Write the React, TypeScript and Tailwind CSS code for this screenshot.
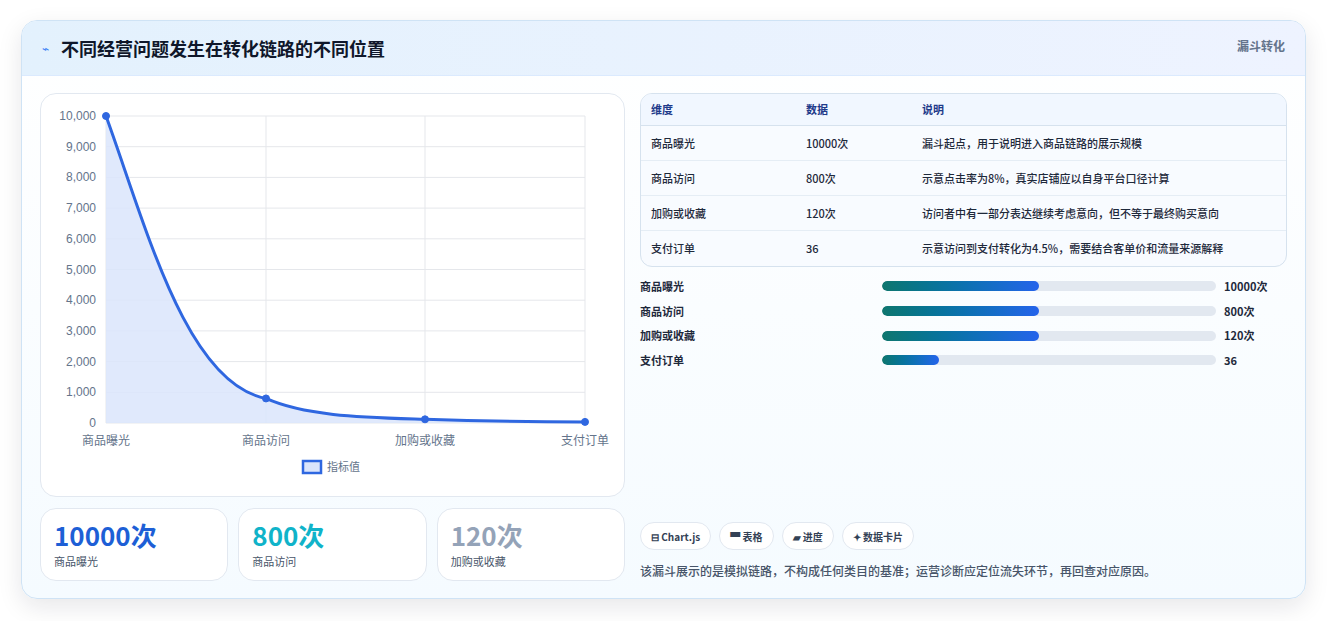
const font = { fontFamily: '"Noto Sans CJK SC", "Noto Sans", sans-serif' };

const rows = [
  ['商品曝光', '10000次', '漏斗起点，用于说明进入商品链路的展示规模'],
  ['商品访问', '800次', '示意点击率为8%，真实店铺应以自身平台口径计算'],
  ['加购或收藏', '120次', '访问者中有一部分表达继续考虑意向，但不等于最终购买意向'],
  ['支付订单', '36', '示意访问到支付转化为4.5%，需要结合客单价和流量来源解释'],
];

const bars = [
  ['商品曝光', 47, '10000次'],
  ['商品访问', 47, '800次'],
  ['加购或收藏', 47, '120次'],
  ['支付订单', 17, '36'],
] as const;

const Chart = () => {
  const x0 = 65, x1 = 544, y0 = 22, y1 = 329;
  const xs = [65, 225, 384, 544];
  const ys = [10000, 800, 120, 36].map((v) => y1 - (v / 10000) * (y1 - y0));
  const line = `M${xs[0]},${ys[0]} C${xs[0] + 40},${ys[0] + 110} ${xs[1] - 80},${ys[1] - 15} ${xs[1]},${ys[1]} C${xs[1] + 40},${ys[1] + 18} ${xs[2] - 60},${ys[2] - 2} ${xs[2]},${ys[2]} C${xs[2] + 60},${ys[2] + 2} ${xs[3] - 60},${ys[3]} ${xs[3]},${ys[3]}`;
  const ticks = Array.from({ length: 11 }, (_, i) => i * 1000);
  const labels = ['商品曝光', '商品访问', '加购或收藏', '支付订单'];
  return (
    <svg width="585" height="403" className="block">
      {ticks.map((t) => {
        const y = y1 - (t / 10000) * (y1 - y0);
        return (
          <g key={t}>
            <line x1={x0} x2={x1} y1={y} y2={y} stroke="#e5e7eb" />
            <text x={55} y={y + 4} textAnchor="end" fontSize="12" fill="#64748b" fontFamily="Liberation Sans, sans-serif">
              {t.toLocaleString('en-US')}
            </text>
          </g>
        );
      })}
      {xs.map((x) => (
        <line key={x} x1={x} x2={x} y1={y0} y2={y1} stroke="#e5e7eb" />
      ))}
      <path d={`${line} L${x1},${y1} L${x0},${y1} Z`} fill="#dbe5fb" opacity="0.85" />
      <path d={line} fill="none" stroke="#2f67e0" strokeWidth="3" />
      {xs.map((x, i) => (
        <circle key={x} cx={x} cy={ys[i]} r="3.5" fill="#2f67e0" stroke="#2f67e0" />
      ))}
      {labels.map((l, i) => (
        <text key={l} x={xs[i]} y={351} textAnchor="middle" fontSize="12" fill="#64748b" style={font}>
          {l}
        </text>
      ))}
      <rect x="262" y="367" width="18" height="12" fill="#dbe5fb" stroke="#2f67e0" strokeWidth="2.5" />
      <text x="286" y="377" fontSize="11" fill="#64748b" style={font}>指标值</text>
    </svg>
  );
};

export default function App() {
  return (
    <div className="min-h-[621px] bg-white px-[21px] pt-5" style={font}>
      <div className="w-[1285px] rounded-2xl border border-[#cfe3f5] bg-gradient-to-b from-white to-[#f5fbff] shadow-[0_8px_24px_rgba(15,23,42,0.10)] overflow-hidden">
        <div className="h-[55px] flex items-center justify-between px-5 bg-gradient-to-r from-[#e3f1fd] to-[#eef3ff] border-b border-[#dbeafe]">
          <div className="flex items-center gap-3">
            <span className="text-[#3b82f6] text-xs">⌁</span>
            <h1 className="text-[18px] font-bold text-[#0f172a]">不同经营问题发生在转化链路的不同位置</h1>
          </div>
          <span className="text-[12px] font-semibold text-[#64748b] self-start mt-4">漏斗转化</span>
        </div>
        <div className="flex gap-[15px] px-[18px] pt-[17px] pb-[17px]">
          <div className="w-[585px] flex flex-col gap-[11px]">
            <div className="h-[404px] rounded-2xl border border-[#e2e8f0] bg-white">
              <Chart />
            </div>
            <div className="grid grid-cols-3 gap-[10px]">
              {[
                ['10000次', '商品曝光', 'text-[#1d5fd6]'],
                ['800次', '商品访问', 'text-[#10b3c9]'],
                ['120次', '加购或收藏', 'text-[#94a3b8]'],
              ].map(([v, l, c]) => (
                <div key={l} className="h-[73px] rounded-2xl border border-[#e2e8f0] bg-white px-[13px] pt-[10px]">
                  <div className={`text-[26px] font-bold leading-[32px] ${c}`}>{v}</div>
                  <div className="text-[11px] text-[#475569] mt-[2px]">{l}</div>
                </div>
              ))}
            </div>
          </div>
          <div className="flex-1 flex flex-col">
            <div className="rounded-xl border border-[#d6e2ee] overflow-hidden bg-[#f8fbff]">
              <div className="flex h-[32px] items-center text-[11px] font-semibold text-[#1e3a8a] border-b border-[#d6e2ee] bg-[#f1f7ff]">
                <div className="w-[165px] pl-[10px]">维度</div>
                <div className="w-[116px]">数据</div>
                <div>说明</div>
              </div>
              {rows.map((r, i) => (
                <div key={r[0]} className={`flex h-[35px] items-center text-[11px] font-medium text-[#1e293b] ${i < 3 ? 'border-b border-[#e5edf5]' : ''}`}>
                  <div className="w-[165px] pl-[10px]">{r[0]}</div>
                  <div className="w-[116px]">{r[1]}</div>
                  <div>{r[2]}</div>
                </div>
              ))}
            </div>
            <div className="mt-[7px] flex flex-col">
              {bars.map(([l, p, v]) => (
                <div key={l} className="flex h-[24.7px] items-center text-[11px] font-semibold text-[#1e293b]">
                  <div className="w-[242px]">{l}</div>
                  <div className="w-[334px] h-[10px] rounded-full bg-[#e2e8f0] overflow-hidden">
                    <div className="h-full rounded-full bg-gradient-to-r from-[#0f766e] to-[#2563eb]" style={{ width: `${p}%` }} />
                  </div>
                  <div className="ml-[8px]">{v}</div>
                </div>
              ))}
            </div>
            <div className="mt-auto flex gap-[8px]">
              {['⊟ Chart.js', '▀ 表格', '▰ 进度', '✦ 数据卡片'].map((t) => (
                <span key={t} className="h-[28px] px-[10px] flex items-center rounded-full border border-[#e2e8f0] bg-white text-[10px] font-semibold text-[#334155]">
                  {t}
                </span>
              ))}
            </div>
            <p className="mt-[12px] mb-[1px] text-[12px] font-medium text-[#475569]">该漏斗展示的是模拟链路，不构成任何类目的基准；运营诊断应定位流失环节，再回查对应原因。</p>
          </div>
        </div>
      </div>
    </div>
  );
}
